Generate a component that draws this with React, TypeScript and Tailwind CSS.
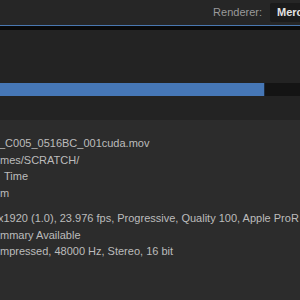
export default function App() {
  const font = { fontFamily: '"Liberation Sans", Arial, sans-serif' }

  return (
    <div className="flex h-[300px] w-[300px] flex-col overflow-hidden bg-[#2c2c2c]" style={font}>
      {/* Top bar with renderer select */}
      <div className="flex h-[25px] shrink-0 items-center justify-end bg-[#262626]">
        <span className="whitespace-nowrap text-[11px] text-[#9a9a9a]">Renderer:</span>
        <div className="ml-[8px] flex h-[19px] w-[30px] shrink-0 items-center overflow-hidden rounded-l-[2px] bg-[#1b1b1b] pl-[7px]">
          <span className="whitespace-nowrap text-[11px] font-bold text-[#e4e4e4]">Mercury</span>
        </div>
      </div>
      <div className="h-px shrink-0 bg-[#4a78b0]" />
      <div className="h-[4px] shrink-0 bg-[#0a0a0a]" />

      {/* Export panel */}
      <div className="h-[53px] shrink-0 bg-[#232323]" />
      <div className="flex h-[13px] shrink-0">
        <div className="w-[264px] bg-[#4677b6]" />
        <div className="flex-1 border-l border-[#1d2c40] bg-[#141414]" />
      </div>
      <div className="h-[24px] shrink-0 bg-[#232323]" />

      {/* Summary */}
      <div className="flex-1 pt-[15px] text-[11px] leading-[16.5px] text-[#bcbcbc]">
        <div className="whitespace-nowrap">
          <div className="-ml-px">_C005_0516BC_001cuda.mov</div>
          <div>mes/SCRATCH/</div>
          <div className="pl-[4px]">Time</div>
          <div>m</div>
        </div>
        <div className="mt-[9px] whitespace-nowrap">
          <div className="-ml-[2px]">x1920 (1.0), 23.976 fps, Progressive, Quality 100, Apple ProR</div>
          <div>mmary Available</div>
          <div>mpressed, 48000 Hz, Stereo, 16 bit</div>
        </div>
      </div>
    </div>
  )
}
